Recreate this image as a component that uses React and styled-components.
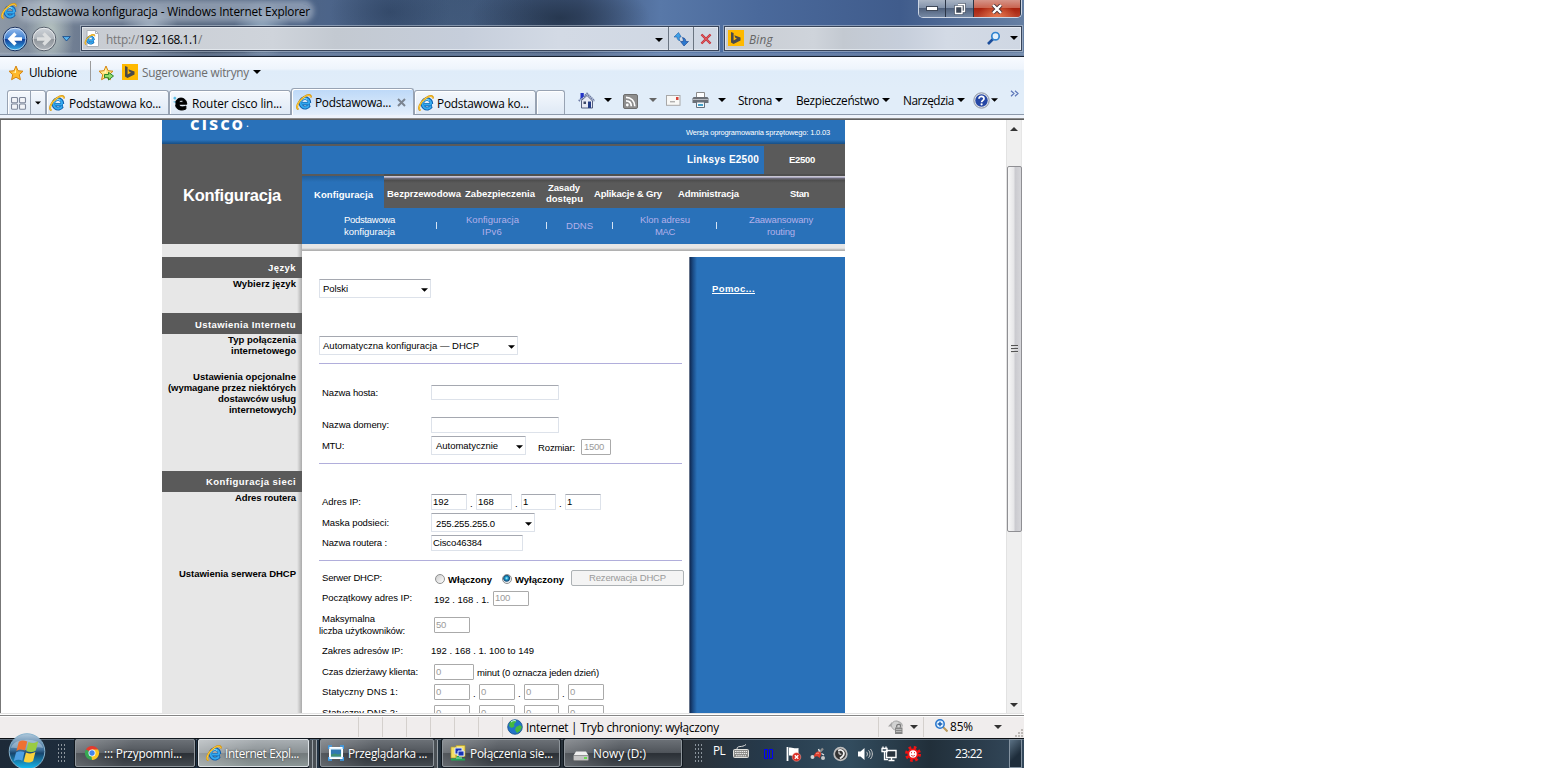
import React, { useLayoutEffect, useRef } from 'react';
import styled, { createGlobalStyle, css } from 'styled-components';

const GlobalStyle = createGlobalStyle`
  * { box-sizing: border-box; }
  body { margin: 0; background: #fff; overflow: hidden; }
`;

const ui = '"Open Sans", "Noto Sans", sans-serif';
const web = '"Liberation Sans", Arial, sans-serif';

/* Spacing of an item inside a bar or a row. */
const place = css`
  flex: none;
  margin-left: ${(p) => p.$ml || 0}px;
  margin-top: ${(p) => p.$mt || 0}px;
`;

/* ---------- text with a set line width ---------- */
const TextBox = styled.span`
  ${place}
  display: block;
  width: ${(p) => p.$w}px;
  height: ${(p) => p.$lh || 12}px;
  line-height: ${(p) => p.$lh || 12}px;
  white-space: nowrap;
  color: ${(p) => p.$c || 'inherit'};
  font-size: ${(p) => (p.$s ? p.$s + 'px' : 'inherit')};
  font-weight: ${(p) => (p.$b ? 700 : 'inherit')};
  font-style: ${(p) => (p.$i ? 'italic' : 'normal')};
  text-decoration: ${(p) => (p.$u ? 'underline' : 'none')};
`;

function T({ w, ml, mt, s, b, c, i, u, lh, children }) {
  const ref = useRef(null);
  useLayoutEffect(() => {
    const el = ref.current;
    el.style.letterSpacing = '0px';
    const natural = el.getBoundingClientRect().width;
    el.style.letterSpacing = (w - natural) / el.textContent.length + 'px';
  }, [w]);
  return (
    <TextBox $w={w} $ml={ml} $mt={mt} $s={s} $b={b} $c={c} $i={i} $u={u} $lh={lh}>
      <span ref={ref}>{children}</span>
    </TextBox>
  );
}

/* ---------- window shell ---------- */
const Desktop = styled.div`
  width: 1024px;
  height: 768px;
  display: flex;
  flex-direction: column;
  overflow: hidden;
  font-family: ${ui};
  font-size: 11.8px;
  color: #000;
`;

const Glass = styled.header`
  flex: none;
  height: 57px;
  border-bottom: 1px solid #17202e;
  background:
    linear-gradient(180deg, transparent 52px, rgba(190, 205, 225, 0.35) 54px, rgba(120, 140, 170, 0.5) 55px),
    radial-gradient(ellipse 24px 50px at 50px 32px, rgba(205, 218, 208, 0.75), transparent),
    radial-gradient(ellipse 28px 26px at 150px 28px, rgba(185, 200, 215, 0.75), transparent),
    radial-gradient(ellipse 28px 30px at 262px 30px, rgba(170, 195, 215, 0.75), transparent),
    radial-gradient(ellipse 60px 26px at 205px 52px, rgba(40, 55, 78, 0.6), transparent),
    radial-gradient(ellipse 90px 40px at 560px 18px, rgba(30, 45, 65, 0.75), transparent),
    radial-gradient(ellipse 60px 40px at 390px 12px, rgba(38, 58, 88, 0.55), transparent),
    radial-gradient(ellipse 110px 60px at 450px 40px, rgba(70, 95, 130, 0.5), transparent),
    linear-gradient(90deg, #8d98a5 0, #66758c 100px, #56677f 200px, #4c6489 330px, #3e5677 450px, #41577c 580px, #5878a8 660px, #4a699b 760px, #405c8c 900px, #657fa3 1024px);
`;
const TitleBar = styled.div`
  display: flex;
  height: 23px;
  padding-left: 1px;
`;
const TitleGlow = styled.div`
  ${place}
  border-radius: 8px;
  background: rgba(190, 200, 214, 0.5);
  box-shadow: 0 0 5px 4px rgba(190, 200, 214, 0.5);
  height: 14px;
`;
const WindowButtons = styled.div`
  display: flex;
  margin-left: 608px;
  width: 104px;
  height: 18px;
  border: 1px solid #cdd6e4;
  border-top: 0;
  border-radius: 0 0 5px 5px;
  overflow: hidden;
`;
const WindowButton = styled.div`
  display: flex;
  justify-content: center;
  align-items: center;
  width: ${(p) => p.$w}px;
  border-right: 1px solid #2b3546;
  background: ${(p) =>
    p.$close
      ? 'radial-gradient(ellipse at 50% 100%, #e8794f, transparent 60%), linear-gradient(#d69488 0, #c96552 45%, #a8220e 50%, #b8402a 100%)'
      : 'linear-gradient(#a9b4c4 0, #8393ab 45%, #50617c 50%, #7689a4 100%)'};
`;
const NavBar = styled.div`
  display: flex;
  height: 31px;
  padding-left: 3px;
`;
const GlassField = styled.div`
  display: flex;
  ${place}
  width: ${(p) => p.$w}px;
  height: 25px;
  border: 1px solid #39455a;
  outline: 1px solid rgba(200, 210, 222, 0.5);
  box-shadow: inset 0 0 0 1px rgba(240, 245, 250, 0.6);
  background: linear-gradient(90deg, #c8ccd2, #cfd4db 30%, #c3c9d1 40%, #c6cedb 60%, #d3dae5 75%, #cfd7e3);
`;
const Rule = styled.div`
  ${place}
  width: 1px;
  height: ${(p) => p.$h}px;
  background: ${(p) => p.$c || '#6a7481'};
`;

const FavBar = styled.div`
  display: flex;
  flex: none;
  height: 31px;
  padding-left: 8px;
  background: linear-gradient(#f8fbff 0, #eef4fc 12px, #dfecf9 14px, #e1edf9 100%);
`;
const TabBar = styled.div`
  display: flex;
  flex: none;
  height: 27px;
  padding-left: 7px;
  background: #e1edf9;
  border-bottom: 1px solid #8d9aab;
`;
const Tab = styled.div`
  display: flex;
  flex: none;
  width: ${(p) => p.$w}px;
  height: ${(p) => (p.$active ? 27 : 24)}px;
  margin-top: ${(p) => (p.$active ? 0 : 2)}px;
  border: 1px solid #98a3b3;
  border-bottom: 0;
  border-radius: 3px 3px 0 0;
  box-shadow: inset 1px 1px 0 #fff;
  background: ${(p) => (p.$active ? 'linear-gradient(#bcd8f8, #e4effb)' : 'linear-gradient(#f4f8fd, #dfe9f5)')};
`;
const PageEdge = styled.div`
  flex: none;
  height: 5px;
  background: linear-gradient(#eef3fb 0 3px, #8c8c8c 3px 4px, #5f5f5f 4px);
`;

/* ---------- page viewport ---------- */
const Viewport = styled.main`
  display: flex;
  flex: none;
  height: 593px;
  border-left: 1px solid #777;
  overflow: hidden;
  background: #fff;
`;
const Page = styled.div`
  width: 683px;
  margin-left: 161px;
  margin-right: 161px;
  flex: none;
  font-family: ${web};
  font-size: 9.5px;
`;
const ScrollTrack = styled.div`
  display: flex;
  flex-direction: column;
  width: 16px;
  background: #efefef;
  border-left: 1px solid #e2e2e2;
  border-right: 1px solid #e6e6e6;
`;
const ScrollThumb = styled.div`
  display: flex;
  flex-direction: column;
  align-items: center;
  justify-content: center;
  gap: 1px;
  width: 15px;
  height: 366px;
  margin-top: 35px;
  border: 1px solid #8f8f93;
  border-radius: 2px;
  background: linear-gradient(90deg, #f7f7f7, #e6e6e8 45%, #cacacf 55%, #d6d6da);
`;
const Grip = styled.i`
  width: 7px;
  height: 2px;
  background: #555;
  border-bottom: 1px solid #ddd;
`;

/* ---------- router page ---------- */
const BrandBar = styled.div`
  display: flex;
  height: 24px;
  overflow: hidden;
  color: #fff;
  background: linear-gradient(#2971b9 0 20px, #1f609f 22px, #184f85 24px);
`;
const Brand = styled.div`
  display: flex;
  ${place}
  font-family: ${ui};
`;
const HeaderRow = styled.div`
  display: flex;
  height: 100px;
  color: #fff;
`;
const SectionTitle = styled.div`
  display: flex;
  width: 140px;
  background: #5a5a5a;
`;
const HeaderMain = styled.div`
  width: 543px;
`;
const ModelBar = styled.div`
  display: flex;
  height: 30px;
  background: #2971b9;
  border-top: 2px solid #5a5a5a;
`;
const ModelBox = styled.div`
  display: flex;
  width: 81px;
  height: 28px;
  background: #5a5a5a;
  margin-left: 5px;
`;
const MenuBar = styled.div`
  display: flex;
  height: 34px;
  background: linear-gradient(#4f4f4f 0 2px, #c8c6d2 2px 3px, #a5a3bb 3px 4px, #6b6975 4px 5px, #4c4c4c 6px, #5a5a5a 9px);
`;
const MenuActive = styled.div`
  display: flex;
  width: 82px;
  background: linear-gradient(#5a5a5a 0 2px, #225e99 2px, #2971b9 8px);
`;
const Stack = styled.div`
  ${place}
  display: flex;
  flex-direction: column;
`;
const SubMenu = styled.div`
  display: flex;
  height: 36px;
  background: #2971b9;
  color: #b3b0ea;
`;
const Body = styled.div`
  display: flex;
  height: 500px;
`;
const Sidebar = styled.aside`
  width: 140px;
  height: 469px;
  padding-top: 13px;
  background: linear-gradient(90deg, transparent 135px, #cfcfcf 137px, #a9a9a9 140px), #e7e7e7;
`;
const SideHead = styled.div`
  display: flex;
  height: 21px;
  margin-top: ${(p) => p.$mt || 0}px;
  background: #5a5a5a;
  color: #fff;
  justify-content: flex-end;
  padding-right: 6px;
`;
const SideText = styled.div`
  display: flex;
  flex-direction: column;
  align-items: flex-end;
  height: ${(p) => p.$h}px;
  padding-right: 6px;
`;
const Main = styled.div`
  width: 543px;
`;
const TopShade = styled.div`
  height: 13px;
  background: linear-gradient(#e6e6e6 0 4px, #d0d0d0 5px, #b1b1b1 6px 7px, #fff 7px);
`;
const Columns = styled.div`
  display: flex;
  height: 480px;
`;
const Form = styled.section`
  width: 387px;
  padding-left: 17px;
`;
const Help = styled.section`
  display: flex;
  width: 156px;
  background: linear-gradient(90deg, #65738a 0 1px, #102b55 1px, #1b4c86 4px, #2971b9 8px);
  color: #fff;
`;
const FormRow = styled.div`
  display: flex;
  height: ${(p) => p.$h}px;
`;
const Divider = styled.div`
  width: 363px;
  height: 1px;
  background: #b1aedb;
`;
const Input = styled.div`
  ${place}
  display: flex;
  width: ${(p) => p.$w}px;
  height: ${(p) => p.$h || 16}px;
  border: 1px solid ${(p) => (p.$off ? '#aaa' : '#dde2ea')};
  border-top-color: ${(p) => (p.$off ? '#aaa' : '#a5a8b0')};
  border-radius: 1px;
  color: ${(p) => (p.$off ? '#9b9b9b' : '#000')};
  background: #fff;
`;
const SelectBox = styled(Input)`
  height: 19px;
  justify-content: space-between;
  padding-right: 2px;
`;
const Radio = styled.i`
  ${place}
  width: 10px;
  height: 10px;
  border: 1px solid #8e8f8f;
  border-radius: 50%;
  background: ${(p) =>
    p.$on ? 'radial-gradient(circle at 45% 40%, #bff4ff 0, #189fd0 1.5px, #174c78 3px, #e8eef2 4px)' : 'linear-gradient(135deg, #ccc, #fff)'};
`;
const Button = styled.div`
  ${place}
  display: flex;
  width: 113px;
  height: 16px;
  border: 1px solid #adb2b5;
  border-radius: 2px;
  background: #f4f4f4;
  color: #9a9a9a;
`;

/* ---------- status bar and taskbar ---------- */
const StatusBar = styled.footer`
  display: flex;
  flex: none;
  height: 25px;
  border-top: 1px solid #e2e2e2;
  background: linear-gradient(#fff 0 1px, #858585 1px 2px, #fff 2px 3px, #f0eded 3px);
`;
const TaskBar = styled.nav`
  display: flex;
  flex: none;
  height: 30px;
  color: #fff;
  border-top: 1px solid #0b0f14;
  background: linear-gradient(rgba(150, 165, 180, 0.5) 0 1px, transparent 1px),
    linear-gradient(90deg, #1d2a38 0, #203346 250px, #26323c 450px, #2a3138 690px, #26394a 760px, #324c5e 850px, #212f3a 930px, #34495c 1024px);
`;
const StartOrb = styled.div`
  ${place}
  display: flex;
  width: 38px;
  height: 38px;
  z-index: 1;
`;
const TaskButton = styled.div`
  ${place}
  display: flex;
  width: ${(p) => p.$w}px;
  height: 28px;
  border: 1px solid ${(p) => (p.$active ? '#dde2e6' : '#8f969c')};
  border-radius: 2px;
  box-shadow: 0 0 0 1px #11181f;
  background: ${(p) =>
    p.$active
      ? 'linear-gradient(110deg, rgba(255,255,255,.3), transparent 50%), linear-gradient(#a8aeb2 0, #8a9194 50%, #72797b 52%, #8c9797 100%)'
      : 'linear-gradient(115deg, rgba(255,255,255,.22), transparent 45%), linear-gradient(#6b7076 0, #50555b 48%, #2b3036 52%, #444a50 100%)'};
  text-shadow: 0 0 2px #222;
`;
const StackEdge = styled.div`
  flex: none;
  width: 4px;
  height: 28px;
  margin-top: 1px;
  border-right: 1px solid #9aa1a7;
  background: #4a5055;
`;
const Dots = styled.div`
  ${place}
  width: 9px;
  height: 21px;
  background: radial-gradient(circle, #8b949c 0.7px, transparent 1px) 0 0 / 3px 4px;
`;
const ShowDesktop = styled.div`
  ${place}
  width: 13px;
  height: 29px;
  border: 1px solid #8493a1;
  background: linear-gradient(135deg, #5b7184, #1e2d3b 60%);
`;

/* ---------- icons ---------- */
const Svg = styled.svg`
  ${place}
  display: block;
`;
const Ico = ({ w = 16, h = 16, vb, ml, mt, children }) => (
  <Svg $ml={ml} $mt={mt} width={w} height={h} viewBox={vb || `0 0 ${w} ${h}`} fill="none">
    {children}
  </Svg>
);
const Arrow = ({ c = '#000', w = 8, ...p }) => (
  <Ico w={w} h={4} vb="0 0 8 4" {...p}><path d="M0 0h8L4 4z" fill={c} /></Ico>
);
const IEShape = () => (
  <>
    <path d="M14 9.800H6.200M13.300 11.300c-1.500 3-5 3.300-7.200 1.400-2.300-2-2.300-5.600 0-7.600 2.700-2.300 7.200-1 7.400 3.900" stroke="#0d5cab" strokeWidth="3.400" />
    <path d="M13.600 9.500H6M13 11.300c-1.400 2.600-4.700 3-6.800 1.200-2.200-1.900-2.200-5.200 0-7.100 2.600-2.200 6.800-1 7 3.600" stroke="#35a9ee" strokeWidth="2.100" />
    <path d="M5 6.500c1.400-2 4.200-2.500 6-1.200" stroke="#9be4ff" strokeWidth="1" />
    <path d="M2.600 15.200C-1 14.500 2 7 8 3c4-2.700 7-2.600 7 .4" stroke="#d8960f" strokeWidth="2" />
    <path d="M2.500 15C-.8 14 2.300 7 8 3.100c3.800-2.500 6.600-2.400 6.700 0" stroke="#ffd447" strokeWidth="1" />
  </>
);
const IE = (p) => <Ico {...p}><IEShape /></Ico>;
const EdgeE = (p) => (
  <Ico {...p}>
    <path d="M3.500 8.200c.3-6.500 10.800-7.500 11.300 1H7c.3 3.300 5 3.100 6.900 1.800v3C9 16.500 3.200 14.300 3.700 9.500M7.200 7.300h4c-.3-2.800-3.800-2.500-4 0z" fill="#000" fillRule="evenodd" stroke="#000" />
    <path d="M1 3l2-1.500L4.500 3 3 5zM1 7l1.500-1L4 8" fill="#59bde6" />
  </Ico>
);
const Bing = (p) => (
  <Ico {...p}><path d="M0 0h16v16H0z" fill="#ffb900" /><path d="M3 2l2.600 1v7.500l3.300-2-1.600-.8-1-2.500 6.200 2.200v3L5.500 14 3 12.500z" fill="#4a4a4a" /></Ico>
);
const Star = ({ add, ...p }) => (
  <Ico {...p}>
    <path d="M8 1l2 4.700 5 .5-3.700 3.500 1.100 5L8 12.200l-4.400 2.500 1.100-5L1 6.200l5-.5z" fill={add ? '#ffe680' : '#ffb92b'} stroke="#d58512" />
    <path d="M8 3L6.800 6.700 4 7l4 1z" fill="#fff5b8" />
    {add && <path d="M6.500 9.500h4V7.300L15.500 11l-5 4v-2.300h-4z" fill="#8fdc6a" stroke="#227a1e" strokeWidth=".9" />}
  </Ico>
);
const NavCircle = ({ off, ...p }) => (
  <Ico {...p} w={26} h={26}>
    <defs>
      <linearGradient id={off ? 'nf' : 'nb'} x1="0" y1="0" x2="0" y2="1">
        <stop offset="0" stopColor={off ? '#cfd4da' : '#9cc0ee'} />
        <stop offset=".48" stopColor={off ? '#b0b6bc' : '#3e7fd0'} />
        <stop offset=".52" stopColor={off ? '#8f959b' : '#123f99'} />
        <stop offset="1" stopColor={off ? '#b3b8be' : '#35b1ee'} />
      </linearGradient>
    </defs>
    <circle cx="13" cy="13" r="11.800" fill={`url(#${off ? 'nf' : 'nb'})`} stroke={off ? '#555e6a' : '#1a2f5a'} />
    <circle cx="13" cy="13" r="10.800" stroke="#fff" strokeOpacity=".6" />
    <path d={off ? 'M6 13h11M12.500 7.500l5.500 5.500-5.500 5.500' : 'M20 13h-11M13.500 7.500L8 13l5.500 5.500'} stroke={off ? '#dcdedf' : '#fff'} strokeWidth="3.400" />
  </Ico>
);
const PageIE = (p) => (
  <Ico {...p} w={16} h={17}>
    <path d="M3 .5h8.500l3 3v13H3z" fill="#fff" stroke="#aab0b8" />
    <path d="M11.500.5v3h3" stroke="#aab0b8" />
    <g transform="translate(.5 4) scale(.68)"><IEShape /></g>
  </Ico>
);
const Refresh = (p) => (
  <Ico {...p}>
    <path d="M5.500 1.500L1 6h3c0 2 .8 3.300 3 3.700C6 8 6.300 7 6.500 6H8V5.500z" fill="#3fa0e6" stroke="#1b5da8" strokeWidth=".6" />
    <path d="M11 14.500L15.500 10h-2.700c0-2.500-1-3.500-3.500-4 1.300 2 1 3 .8 4H7.500z" fill="#2c78cf" stroke="#143f8a" strokeWidth=".6" transform="translate(0 .5)" />
  </Ico>
);
const StopX = (p) => (
  <Ico {...p} w={12} h={12}><path d="M1.500 1.500l9 9M10.500 1.500l-9 9" stroke="#b02a33" strokeWidth="2.400" /><path d="M1.500 1.500l9 9M10.500 1.500l-9 9" stroke="#e2555c" strokeWidth="1.200" /></Ico>
);
const Magnifier = (p) => (
  <Ico {...p} w={14} h={14}><path d="M1 13l5-5" stroke="#1b4d9b" strokeWidth="2.600" /><circle cx="8.500" cy="5.200" r="3.700" fill="#e2f0fb" stroke="#2f83cf" strokeWidth="1.700" /></Ico>
);
const Grid4 = (p) => (
  <Ico {...p} w={16} h={13}>
    {[[0.5, 0.5], [8.5, 0.5], [0.5, 7], [8.5, 7]].map(([x, y]) => (
      <rect key={x + '-' + y} x={x} y={y} width="6" height="5.200" rx="1" fill="#f2f4f8" stroke="#7e879a" strokeWidth="1.100" />
    ))}
  </Ico>
);
const Home = (p) => (
  <Ico {...p} w={17} h={17}>
    <path d="M3.500 8.500L9 3.500 14.500 9v7h-11z" fill="#e6e9f4" stroke="#465073" strokeWidth=".9" />
    <path d="M.8 9L9 1.700 16.500 9" stroke="#6f7da6" strokeWidth="2" strokeDasharray="1.500 .6" />
    <path d="M2.500 1h3.300v3.600L2.500 7z" fill="#2334c7" />
    <path d="M10 9.500h3V16h-3z" fill="#223b86" /><path d="M5.500 9.500H8V12H5.500z" fill="#3d4766" />
  </Ico>
);
const Rss = (p) => (
  <Ico {...p} w={15} h={15}>
    <rect x=".5" y=".5" width="14" height="14" rx="1.500" fill="#8e8e8e" stroke="#6d6d6d" />
    <circle cx="4.300" cy="11" r="1.400" fill="#fff" /><path d="M3 6.800c3 0 5.300 2 5.300 5.500M3 3.300c5 0 8.800 3.500 8.800 9" stroke="#fff" strokeWidth="1.700" />
  </Ico>
);
const Mail = (p) => (
  <Ico {...p} w={15} h={11}><rect x=".5" y=".5" width="13.500" height="9.800" fill="#f8f8f6" stroke="#a8a8a8" /><rect x="10" y="2" width="2.500" height="3" fill="#d84339" /><path d="M4 6.800h5" stroke="#888" strokeWidth=".9" /></Ico>
);
const Printer = (p) => (
  <Ico {...p} w={17} h={16}>
    <path d="M4.500.5h8V6h-8z" fill="#fff" stroke="#8b8b8b" /><path d="M1.500 5h14l1 1.500V11h-16V6.500z" fill="#6c7077" />
    <path d="M1 7.500h15" stroke="#b7bbc1" /><path d="M4.500 10h8v5.500h-8z" fill="#f4f8fb" stroke="#67707b" /><path d="M6 12h5v2H6z" fill="#43a0c9" />
  </Ico>
);
const HelpIcon = (p) => (
  <Ico {...p} w={17} h={17}>
    <circle cx="8.500" cy="8.500" r="7.700" fill="#dfe3e9" stroke="#8a91a1" /><circle cx="8.500" cy="8.500" r="6.200" fill="#2446a5" />
    <path d="M6 6.700c0-3.200 5.200-3 5 0-.1 1.700-2.400 1.600-2.400 3.600" stroke="#fff" strokeWidth="1.700" /><circle cx="8.600" cy="12.300" r="1.100" fill="#fff" />
  </Ico>
);
const Globe = (p) => (
  <Ico {...p}>
    <circle cx="8" cy="8" r="7.300" fill="#2273c9" stroke="#174f86" strokeWidth=".8" />
    <path d="M3 3c3-2.500 6-2 6.500-.5L7 5l.5 2.500L4.500 9 2 7zM9 8l4-2 2 2-2 4-3 2-2-3z" fill="#45b83f" /><path d="M4 3c2-1.500 4-1.800 5-1" stroke="#c8f2ff" />
  </Ico>
);
const LockIcon = (p) => (
  <Ico {...p} w={17} h={16}>
    <path d="M9 2.500c3.500 0 6 2 6.500 5" stroke="#b0b0b0" strokeWidth="1.300" /><path d="M1 7.500L5 3v2.500c1.500 0 3 .5 3.500 2z" fill="#a5a5a5" /><circle cx="9" cy="6.500" r="4.500" fill="#d2d2d2" stroke="#a8a8a8" />
    <rect x="8" y="8.500" width="7.500" height="6.500" fill="#858585" /><path d="M9.700 8.500V7c0-2.200 4-2.200 4 0v1.500" stroke="#777" strokeWidth="1.200" /><path d="M9 10.500h5.500M9 12.500h5.500" stroke="#d0d0d0" strokeWidth=".7" />
  </Ico>
);
const ZoomIcon = (p) => (
  <Ico {...p} w={13} h={13}><path d="M8 8l4.500 4.500" stroke="#b9985a" strokeWidth="2" /><circle cx="5" cy="5" r="4.200" fill="#dff0ff" stroke="#2776ce" strokeWidth="1.500" /><path d="M5 2.700v4.600M2.700 5h4.600" stroke="#175cb0" strokeWidth="1.400" /></Ico>
);
const SizeGrip = (p) => (
  <Ico {...p} w={9} h={9}>{[[6, 0], [3, 3], [6, 3], [0, 6], [3, 6], [6, 6]].map(([x, y]) => <rect key={x + '-' + y} x={x} y={y} width="2" height="2" fill="#bdb9b6" />)}</Ico>
);
const Orb = () => (
  <Ico w={38} h={38}>
    <defs>
      <linearGradient id="orb" x1="0" y1="0" x2="0" y2="1"><stop offset="0" stopColor="#b1c9dc" /><stop offset=".45" stopColor="#3e6f9a" /><stop offset=".55" stopColor="#17446c" /><stop offset="1" stopColor="#16bff5" /></linearGradient>
    </defs>
    <circle cx="19" cy="18.500" r="17.800" fill="url(#orb)" stroke="#86b2cd" />
    <path d="M3 15C5 4 33 4 35 15c-8-3-13 3-19 2S7 14 3 15z" fill="#d3e4ef" fillOpacity=".4" />
    <path d="M10.800 8.800c3-2 5.500-1.700 8.500-.3l-2.400 9c-2.800-1.300-5.500-1.200-8.500.6z" fill="#ee7132" />
    <path d="M20.500 9c3.200 1.500 6.500 1.300 9.700-.8l-2.400 9.200c-3.200 1.900-6.500 2-9.500.6z" fill="#9acb43" />
    <path d="M8 19.500c2.800-1.700 5.600-1.700 8.500-.4l-2.200 8.600c-2.800-1.300-5.700-1.200-8.600.6z" fill="#4d9fe3" />
    <path d="M17.900 19.600c3.200 1.400 6.300 1.300 9.500-.5l-2.300 8.900c-3.100 2-6.300 2-9.400.5z" fill="#fbd13c" />
  </Ico>
);
const Chrome = (p) => (
  <Ico {...p}>
    <path d="M8 8L1.900 4.500A7 7 0 0 1 14.100 4.500z" fill="#e33b2e" /><path d="M8 8L1.900 4.500A7 7 0 0 0 8 15z" fill="#37a852" /><path d="M8 8h-1L8 15A7 7 0 0 0 14.100 4.500H8z" fill="#fbc722" />
    <circle cx="8" cy="8" r="3.500" fill="#fff" /><circle cx="8" cy="8" r="2.700" fill="#4285ec" />
  </Ico>
);
const Viewer = (p) => (
  <Ico {...p}><rect x="1.500" y="2.500" width="13" height="11" fill="#e5f5fd" stroke="#fff" /><path d="M3 4.500h10v7H3z" fill="#2f78b0" /><path d="M3 9.500l4-1 3 1 3-1v3H3z" fill="#3f8f72" /><path d="M.7 4V1H4M12 1h3.300v3M15.300 12v3H12M4 15H.7v-3" stroke="#3e9eea" strokeWidth="1.400" /></Ico>
);
const Network = (p) => (
  <Ico {...p}><path d="M1 2h5v11H1zM6 .500h9v11H6z" fill="#f3df67" stroke="#b59c26" strokeWidth=".7" /><path d="M5 3h7v6H5z" fill="#1732b5" stroke="#dce8ff" /><path d="M8 6h6v5H8z" fill="#1732b5" stroke="#dce8ff" /><path d="M8 11v2M1 14.500h14" stroke="#22a554" strokeWidth="2" /><path d="M6 13h6" stroke="#68da90" strokeWidth="1.500" /></Ico>
);
const Drive = (p) => (
  <Ico {...p} w={16} h={10}><path d="M3 .5h10l2.500 4h-15z" fill="#efefef" /><rect x=".5" y="4.500" width="15" height="5" rx="1" fill="#c5c5c5" stroke="#808080" strokeWidth=".6" /><path d="M11 7h3" stroke="#4be02d" strokeWidth="1.500" /></Ico>
);
const Keyboard = (p) => (
  <Ico {...p} w={16} h={14}><rect x="0.500" y="5.500" width="15" height="8" rx="1" fill="#8b8b88" stroke="#e2e2de" /><path d="M2 7.500h12M2 9.500h12M3 11.700h10" stroke="#eee" strokeWidth="1.100" strokeDasharray="1.500 .7" /><path d="M4 5c0-4 5-1 9-4.500" stroke="#ddd" /></Ico>
);
const BlueBars = (p) => (
  <Ico {...p} w={9} h={10}><path d="M.5.5h3v9h-3zM5.500.5h3v9h-3z" stroke="#0000f8" /></Ico>
);
const Flag = (p) => (
  <Ico {...p}><path d="M1.500 1v14" stroke="#fff" strokeWidth="1.800" /><path d="M3 1.500c4-.5 5 1.500 9.500.5v8c-4 1-5.500-1-9.500-.5z" fill="#fff" /><circle cx="10.500" cy="11" r="4.300" fill="#d92c24" stroke="#f6b0a8" strokeWidth=".5" /><path d="M8.800 9.300l3.500 3.500M12.300 9.300l-3.500 3.500" stroke="#fff" strokeWidth="1.400" /></Ico>
);
const Bug = (p) => (
  <Ico {...p}><path d="M8 8l5-5.500" stroke="#8d8d8d" strokeWidth="2.200" /><circle cx="2.500" cy="11" r="2" fill="#d4d4d4" /><circle cx="13" cy="12" r="2" fill="#c9c9c9" /><path d="M4 11c0-4 3-6 5.500-5.500C12 6.500 11 10 9.500 12 8 10 6 10 4 11z" fill="#e0402f" /><path d="M6 8c1-1 2-1 3-.5" stroke="#ff9f8c" /><path d="M11.500 7.500l2.500 1.500M8.500 3l1 2.500" stroke="#e6e6e6" strokeWidth="1.400" /></Ico>
);
const Dial = (p) => (
  <Ico {...p}><circle cx="7.500" cy="8" r="6.300" fill="#333" stroke="#bdbdbd" strokeWidth="1.700" /><path d="M5 4.500c4-2 8 2 4.500 6L7 12.500" stroke="#f0f0f0" strokeWidth="1.800" /><path d="M6.300 5.500c-1 1.500 0 3 2 2.800" stroke="#c9c9c9" strokeWidth="1.400" /></Ico>
);
const Speaker = (p) => (
  <Ico {...p}><path d="M1 5.500h2.500L7.500 2v12l-4-3.500H1z" fill="#fff" /><path d="M9.500 5.800c1.200 1.300 1.200 3.200 0 4.500M11.500 4.300c2 2.200 2 5.200 0 7.400M13.400 3c2.600 3 2.600 7 0 10" stroke="#ccc" /></Ico>
);
const Lan = (p) => (
  <Ico {...p}><path d="M5.500 4.500h9.500v7H5.500zM7.500 14.500h6M10.500 12v2.500" stroke="#fff" strokeWidth="1.400" fill="#28333d" /><path d="M1 2.500v3h5v-3zM2 .500v2M5 .500v2M3.500 5v8.500H7" stroke="#fff" strokeWidth="1.300" /></Ico>
);
const RedFace = (p) => (
  <Ico {...p}><circle cx="8" cy="8" r="6.500" stroke="#f01313" strokeWidth="3" strokeDasharray="2.600 2.500" /><circle cx="8" cy="8" r="5.500" fill="#f01313" /><circle cx="8" cy="8" r="3.700" fill="#fff" /><path d="M6 9c1 1.500 3 1.500 4 0M6.500 6v1.300M9.500 6v1.300" stroke="#e03030" strokeWidth=".9" /></Ico>
);

const AddressGroup = ({ values, off, w }) => (
  <>
    {values.map((v, n) => (
      <React.Fragment key={n}>
        {n > 0 && <T w={3} ml={3} mt={4}>.</T>}
        <Input $w={n === 2 ? 35 : 36} $ml={n === 0 ? w : 3} $off={off}>
          <T w={v.length * 5.2} ml={1} mt={1}>{v}</T>
        </Input>
      </React.Fragment>
    ))}
  </>
);

const RouterPage = () => (
  <Page>
    <BrandBar>
      <Brand $ml={28} $mt={-8}><T w={55} lh={22} s={18.5} b>cisco</T><T w={3} lh={22} ml={1} s={11}>.</T></Brand>
      <T w={144} ml={437} mt={7} s={7.5}>Wersja oprogramowania sprzętowego: 1.0.03</T>
    </BrandBar>
    <HeaderRow>
      <SectionTitle><T w={98} ml={21} mt={41} lh={20} s={16.5} b>Konfiguracja</T></SectionTitle>
      <HeaderMain>
        <ModelBar>
          <T w={72} ml={385} mt={8} s={10} b>Linksys E2500</T>
          <ModelBox><T w={26} ml={25} mt={8} s={9.5} b>E2500</T></ModelBox>
        </ModelBar>
        <MenuBar>
          <MenuActive><T w={59} ml={12} mt={15} b>Konfiguracja</T></MenuActive>
          <T w={74} ml={3} mt={14} b>Bezprzewodowa</T>
          <T w={70} ml={4} mt={14} b>Zabezpieczenia</T>
          <Stack $ml={11} $mt={8}><T w={32} ml={2} lh={11} b>Zasady</T><T w={37} lh={11} b>dostępu</T></Stack>
          <T w={68} ml={11} mt={14} b>Aplikacje &amp; Gry</T>
          <T w={61} ml={16} mt={14} b>Administracja</T>
          <T w={19} ml={51} mt={14} b>Stan</T>
        </MenuBar>
        <SubMenu>
          <Stack $ml={42} $mt={6}><T w={51} c="#fff">Podstawowa</T><T w={51} c="#fff">konfiguracja</T></Stack>
          <Rule $h={7} $ml={41} $mt={14} $c="#d5e3f3" />
          <Stack $ml={29} $mt={6}><T w={53}>Konfiguracja</T><T w={20} ml={16}>IPv6</T></Stack>
          <Rule $h={7} $ml={27} $mt={14} $c="#d5e3f3" />
          <T w={27} ml={19} mt={12}>DDNS</T>
          <Rule $h={7} $ml={19} $mt={14} $c="#d5e3f3" />
          <Stack $ml={27} $mt={6}><T w={50}>Klon adresu</T><T w={20} ml={15}>MAC</T></Stack>
          <Rule $h={7} $ml={26} $mt={14} $c="#d5e3f3" />
          <Stack $ml={32} $mt={6}><T w={64}>Zaawansowany</T><T w={28} ml={18}>routing</T></Stack>
        </SubMenu>
      </HeaderMain>
    </HeaderRow>
    <Body>
      <Sidebar>
        <SideHead><T w={28} mt={5} b>Język</T></SideHead>
        <SideText $h={35}><T w={63} b>Wybierz język</T></SideText>
        <SideHead><T w={101} mt={6} b>Ustawienia Internetu</T></SideHead>
        <SideText $h={137}>
          <T w={68} lh={11} b>Typ połączenia</T>
          <T w={65} lh={11} b>internetowego</T>
          <T w={103} lh={11} mt={15} b>Ustawienia opcjonalne</T>
          <T w={128} lh={11} b>(wymagane przez niektórych</T>
          <T w={78} lh={11} b>dostawców usług</T>
          <T w={67} lh={11} b>internetowych)</T>
        </SideText>
        <SideHead><T w={90} mt={5} b>Konfiguracja sieci</T></SideHead>
        <SideText $h={76}><T w={61} b>Adres routera</T></SideText>
        <SideText $h={20}><T w={117} b>Ustawienia serwera DHCP</T></SideText>
      </Sidebar>
      <Main>
        <TopShade />
        <Columns>
          <Form>
            <FormRow $h={79}><SelectBox $w={112} $mt={22}><T w={25} ml={3} mt={3}>Polski</T><Arrow w={7} mt={8} /></SelectBox></FormRow>
            <FormRow $h={27}><SelectBox $w={199}><T w={156} ml={3} mt={3}>Automatyczna konfiguracja — DHCP</T><Arrow w={7} mt={8} /></SelectBox></FormRow>
            <Divider />
            <FormRow $h={53}><T w={56} ml={3} mt={23}>Nazwa hosta:</T><Input $w={128} $ml={53} $mt={21} $h={15} /></FormRow>
            <FormRow $h={19}><T w={67} ml={3} mt={2}>Nazwa domeny:</T><Input $w={128} $ml={42} /></FormRow>
            <FormRow $h={27}>
              <T w={22} ml={3} mt={4}>MTU:</T>
              <SelectBox $w={95} $ml={87}><T w={62} ml={4} mt={3}>Automatycznie</T><Arrow w={7} mt={8} /></SelectBox>
              <T w={37} ml={12} mt={6}>Rozmiar:</T>
              <Input $w={30} $ml={6} $mt={3} $off><T w={20} ml={2} mt={1}>1500</T></Input>
            </FormRow>
            <Divider />
            <FormRow $h={30} />
            <FormRow $h={19}><T w={39} ml={3} mt={2}>Adres IP:</T><AddressGroup w={70} values={['192', '168', '1', '1']} /></FormRow>
            <FormRow $h={22}>
              <T w={67} ml={3} mt={4}>Maska podsieci:</T>
              <SelectBox $w={104} $ml={42}><T w={59} ml={4} mt={4}>255.255.255.0</T><Arrow w={7} mt={8} /></SelectBox>
            </FormRow>
            <FormRow $h={25}>
              <T w={65} ml={3} mt={2}>Nazwa routera :</T>
              <Input $w={92} $ml={44}><T w={49} ml={1} mt={1}>Cisco46384</T></Input>
            </FormRow>
            <Divider />
            <FormRow $h={30}>
              <T w={60} ml={3} mt={11}>Serwer DHCP:</T>
              <Radio $ml={53} $mt={13} /><T w={44} ml={3} mt={13} b>Włączony</T>
              <Radio $on $ml={10} $mt={13} /><T w={49} ml={3} mt={13} b>Wyłączony</T>
              <Button $ml={7} $mt={9}><T w={77} ml={17} mt={1}>Rezerwacja DHCP</T></Button>
            </FormRow>
            <FormRow $h={26}>
              <T w={90} ml={3} mt={1}>Początkowy adres IP:</T>
              <T w={55} ml={22} mt={3}>192 . 168 . 1.</T>
              <Input $w={36} $h={15} $ml={4} $off><T w={15} ml={1}>100</T></Input>
            </FormRow>
            <FormRow $h={28}>
              <Stack $mt={-4}><T w={53} ml={3}>Maksymalna</T><T w={86}>liczba użytkowników:</T></Stack>
              <Input $w={36} $ml={29} $off><T w={10} ml={1} mt={1}>50</T></Input>
            </FormRow>
            <FormRow $h={19}><T w={81} ml={3}>Zakres adresów IP:</T><T w={103} ml={28}>192 . 168 . 1. 100 to 149</T></FormRow>
            <FormRow $h={20}>
              <T w={96} ml={3} mt={2}>Czas dzierżawy klienta:</T>
              <Input $w={40} $ml={16} $off><T w={5} ml={1} mt={1}>0</T></Input>
              <T w={122} ml={3} mt={3}>minut (0 oznacza jeden dzień)</T>
            </FormRow>
            <FormRow $h={21}><T w={76} ml={3} mt={2}>Statyczny DNS 1:</T><AddressGroup w={36} off values={['0', '0', '0', '0']} /></FormRow>
            <FormRow $h={21}><T w={76} ml={3} mt={2}>Statyczny DNS 2:</T><AddressGroup w={36} off values={['0', '0', '0', '0']} /></FormRow>
          </Form>
          <Help><T w={43} ml={23} mt={26} b u>Pomoc...</T></Help>
        </Columns>
      </Main>
    </Body>
  </Page>
);

export default function App() {
  return (
    <Desktop>
      <GlobalStyle />
      <Glass>
        <TitleBar>
          <IE mt={3} />
          <TitleGlow $ml={4} $mt={4}><T w={289} lh={14}>Podstawowa konfiguracja - Windows Internet Explorer</T></TitleGlow>
          <WindowButtons>
            <WindowButton $w={28}><Ico w={12} h={5}><rect x=".5" y=".5" width="11" height="4" fill="#fff" stroke="#3e4858" /></Ico></WindowButton>
            <WindowButton $w={28}><Ico w={12} h={12}><path d="M4 1.500h6.500v7H8M1.500 3.500h6.500v7H1.500zM4 6h1.500v2H4z" stroke="#3e4858" strokeWidth="2.600" /><path d="M4 1.500h6.500v7H8M1.500 3.500h6.500v7H1.500z" stroke="#fff" strokeWidth="1.400" /></Ico></WindowButton>
            <WindowButton $w={48} $close><Ico w={12} h={10}><path d="M2 1l8 8M10 1L2 9" stroke="#4a3136" strokeWidth="4" /><path d="M2 1l8 8M10 1L2 9" stroke="#fff" strokeWidth="2.400" /></Ico></WindowButton>
          </WindowButtons>
        </TitleBar>
        <NavBar>
          <NavCircle ml={-1} mt={3} /><NavCircle off ml={3} mt={3} />
          <Ico w={9} h={6} ml={5} mt={13}><path d="M.7.600h7.600L4.500 5z" fill="#59b5ee" stroke="#1b4d8b" strokeWidth=".9" /></Ico>
          <GlassField $ml={10} $mt={3} $w={638}>
            <PageIE ml={2} mt={3} />
            <T w={33} ml={6} mt={4} lh={16} c="#777">http://</T><T w={59} mt={4} lh={16}>192.168.1.1</T><T w={4} mt={4} lh={16} c="#777">/</T>
            <Arrow ml={453} mt={11} />
            <Rule $ml={5} $h={23} /><Refresh ml={4} mt={4} /><Rule $ml={4} $h={23} /><StopX ml={6} mt={6} />
          </GlassField>
          <GlassField $ml={5} $mt={3} $w={298}>
            <Bing ml={3} mt={3} /><T w={24} ml={5} mt={4} lh={16} i c="#666">Bing</T>
            <Magnifier ml={214} mt={4} /><Arrow ml={9} mt={9} />
          </GlassField>
        </NavBar>
      </Glass>
      <FavBar>
        <Star mt={8} /><T w={48} ml={5} mt={7} lh={16}>Ulubione</T>
        <Rule $ml={13} $mt={4} $h={20} $c="#9b9b9b" />
        <Star add ml={7} mt={8} /><Bing ml={8} mt={7} />
        <T w={107} ml={4} mt={7} lh={16} c="#6d6d6d">Sugerowane witryny</T><Arrow ml={4} mt={13} />
      </FavBar>
      <TabBar>
        <Tab $w={39}><Grid4 ml={3} mt={6} /><Rule $ml={3} $h={23} $c="#98a3b3" /><Arrow w={6} ml={4} mt={10} /></Tab>
        <Tab $w={123}><IE ml={2} mt={4} /><T w={92} ml={4} mt={4} lh={16}>Podstawowa ko...</T></Tab>
        <Tab $w={122}><EdgeE ml={2} mt={4} /><T w={90} ml={4} mt={4} lh={16}>Router cisco lin...</T></Tab>
        <Tab $w={123} $active><IE ml={4} mt={5} /><T w={76} ml={3} mt={5} lh={16}>Podstawowa...</T><Ico w={9} h={9} ml={6} mt={9}><path d="M1 1l7 7M8 1L1 8" stroke="#7b8490" strokeWidth="2" /></Ico></Tab>
        <Tab $w={122}><IE ml={3} mt={4} /><T w={92} ml={3} mt={4} lh={16}>Podstawowa ko...</T></Tab>
        <Tab $w={29} />
        <Home ml={13} mt={4} /><Arrow ml={9} mt={10} />
        <Rss ml={11} mt={6} /><Arrow c="#666" ml={11} mt={10} />
        <Mail ml={9} mt={7} /><Printer ml={11} mt={4} /><Arrow ml={9} mt={10} />
        <T w={34} ml={12} mt={4} lh={16}>Strona</T><Arrow ml={3} mt={10} />
        <T w={83} ml={13} mt={4} lh={16}>Bezpieczeństwo</T><Arrow ml={3} mt={10} />
        <T w={51} ml={13} mt={4} lh={16}>Narzędzia</T><Arrow ml={3} mt={10} />
        <HelpIcon ml={8} mt={4} /><Arrow w={7} ml={1} mt={10} />
        <Ico w={9} h={7} ml={12} mt={2}><path d="M1 .700l3 2.800-3 2.800M5 .700l3 2.800-3 2.800" stroke="#5b75b8" strokeWidth="1.200" /></Ico>
      </TabBar>
      <PageEdge />
      <Viewport>
        <RouterPage />
        <ScrollTrack>
          <Ico w={8} h={4} ml={3} mt={7}><path d="M0 4l4-4 4 4z" fill="#333" /></Ico>
          <ScrollThumb><Grip /><Grip /><Grip /></ScrollThumb>
          <Arrow ml={3} mt={171} c="#333" />
        </ScrollTrack>
      </Viewport>
      <StatusBar>
        {[358, 23, 23, 23, 23, 23, 23].map((ml, n) => <Rule key={n} $ml={ml} $mt={3} $h={20} $c="#d4d0cd" />)}
        <Globe ml={4} mt={5} /><T w={193} ml={3} mt={5} lh={16}>Internet | Tryb chroniony: wyłączony</T>
        <Rule $ml={159} $mt={3} $h={20} $c="#d4d0cd" /><LockIcon ml={8} mt={5} /><Arrow c="#333" ml={6} mt={11} />
        <Rule $ml={5} $mt={3} $h={20} $c="#d4d0cd" /><ZoomIcon ml={11} mt={5} /><T w={23} ml={2} mt={4} lh={16}>85%</T>
        <Arrow c="#333" ml={21} mt={11} /><SizeGrip ml={13} mt={15} />
      </StatusBar>
      <TaskBar>
        <StartOrb $ml={8} $mt={-6}><Orb /></StartOrb>
        <Dots $ml={11} $mt={4} />
        <TaskButton $w={120} $ml={9} $mt={0}><Chrome ml={8} mt={5} /><T w={78} ml={4} mt={5} lh={16}>::: Przypomni...</T></TaskButton>
        <TaskButton $w={111} $ml={3} $mt={0} $active><IE ml={7} mt={5} /><T w={74} ml={3} mt={5} lh={16}>Internet Expl...</T></TaskButton>
        <StackEdge /><StackEdge />
        <TaskButton $w={114} $ml={3}><Viewer ml={7} mt={5} /><T w={79} ml={4} mt={5} lh={16}>Przeglądarka ...</T></TaskButton>
        <StackEdge />
        <TaskButton $w={118} $ml={4}><Network ml={7} mt={5} /><T w={83} ml={4} mt={5} lh={16}>Połączenia sie...</T></TaskButton>
        <TaskButton $w={118} $ml={4}><Drive ml={8} mt={11} /><T w={53} ml={4} mt={5} lh={16}>Nowy (D:)</T></TaskButton>
        <Dots $ml={12} $mt={4} />
        <T w={12} ml={10} mt={3} lh={16}>PL</T><Keyboard ml={8} mt={5} />
        <BlueBars ml={15} mt={10} /><Flag ml={13} mt={7} /><Bug ml={8} mt={7} /><Dial ml={7} mt={7} /><Speaker ml={8} mt={7} /><Lan ml={8} mt={7} /><RedFace ml={8} mt={7} />
        <T w={27} ml={34} mt={6} lh={16}>23:22</T>
        <ShowDesktop $ml={27} />
      </TaskBar>
    </Desktop>
  );
}
